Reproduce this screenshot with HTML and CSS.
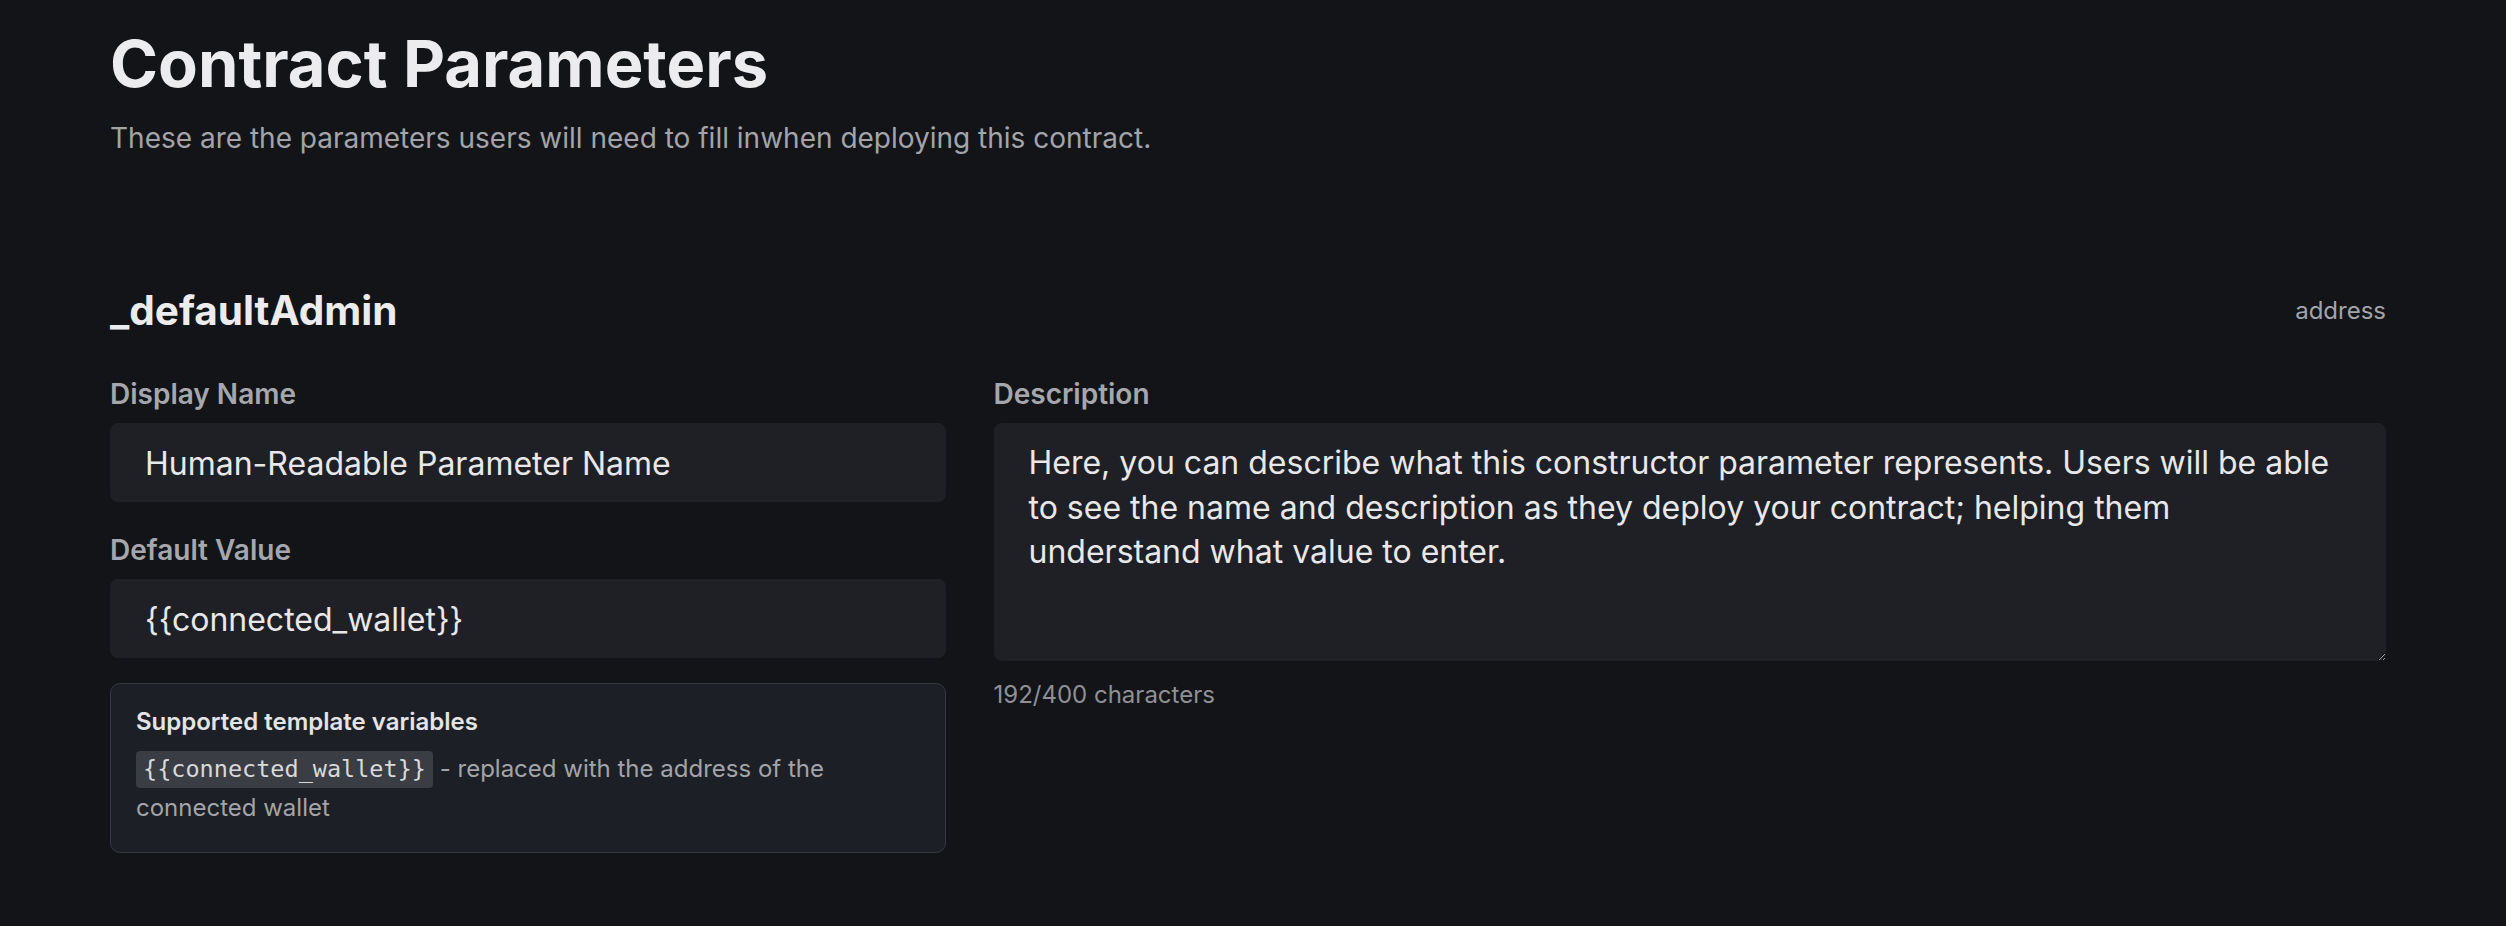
FILE: index.html
```html
<!DOCTYPE html>
<html lang="en">
<head>
<meta charset="utf-8">
<title>Contract Parameters</title>
<link rel="stylesheet" href="styles.css">
</head>
<body>
<main class="page">
  <header class="intro">
    <h1 class="title">Contract Parameters</h1>
    <p class="subtitle">These are the parameters users will need to fill inwhen deploying this contract.</p>
  </header>

  <section class="param">
    <div class="param-head">
      <h2 class="param-name">_defaultAdmin</h2>
      <span class="param-type">address</span>
    </div>
    <div class="param-grid">
      <div class="col">
        <label class="field-label" for="dn">Display Name</label>
        <input class="field-input" id="dn" type="text" value="Human-Readable Parameter Name">
        <label class="field-label field-label--gap" for="dv">Default Value</label>
        <input class="field-input" id="dv" type="text" value="{{connected_wallet}}">
        <div class="hint">
          <div class="hint-title">Supported template variables</div>
          <p class="hint-text"><code class="chip">{{connected_wallet}}</code> - replaced with the address of the connected wallet</p>
        </div>
      </div>
      <div class="col">
        <label class="field-label" for="desc">Description</label>
        <textarea class="field-area" id="desc">Here, you can describe what this constructor parameter represents. Users will be able to see the name and description as they deploy your contract; helping them understand what value to enter.</textarea>
        <div class="counter">192/400 characters</div>
      </div>
    </div>
  </section>
</main>
</body>
</html>
```

FILE: styles.css
```css
html, body {
  margin: 0;
  padding: 0;
  background: #121418;
  color-scheme: dark;
}

body {
  font-family: Inter, "Noto Sans", sans-serif;
  color: #e8e8ea;
}

.page {
  margin-left: 110px;
  width: 2276px;
  padding-top: 25px;
}

.title {
  margin: 0;
  font-size: 65px;
  line-height: 77px;
  font-weight: 700;
  color: #ececee;
}

.subtitle {
  margin: 16px 0 0;
  font-size: 28px;
  line-height: 40px;
  color: #a3a4a9;
}

.param {
  margin-top: 131px;
}

.param-head {
  display: flex;
  justify-content: space-between;
  align-items: center;
}

.param-name {
  margin: 0;
  font-size: 40.5px;
  line-height: 44px;
  font-weight: 700;
  color: #ececee;
}

.param-type {
  font-size: 24px;
  line-height: 30px;
  color: #a3a4a9;
}

.param-grid {
  display: grid;
  grid-template-columns: 3fr 5fr;
  column-gap: 48px;
  margin-top: 44px;
}

.col {
  display: flex;
  flex-direction: column;
  align-items: stretch;
}

.field-label {
  display: block;
  font-size: 28px;
  line-height: 34px;
  font-weight: 600;
  color: #a6a7ac;
  margin-bottom: 12px;
}

.field-label--gap {
  margin-top: 31px;
}

.field-input,
.field-area {
  box-sizing: border-box;
  width: 100%;
  border: 0;
  outline: none;
  background: #1e2025;
  border-radius: 8px;
  font-family: Inter, "Noto Sans", sans-serif;
  font-size: 32px;
  line-height: 44px;
  color: #e8e8ea;
  padding: 18px 35px 17px;
  margin: 0;
}

.field-input {
  height: 79px;
}

.field-area {
  height: 238px;
  line-height: 44.5px;
  resize: vertical;
  display: block;
}

.hint {
  margin-top: 25px;
  border: 1px solid #34373d;
  border-radius: 10px;
  background: #1c1f25;
  padding: 23px 25px 25px;
}

.hint-title {
  font-size: 24px;
  line-height: 30px;
  font-weight: 600;
  color: #e4e4e6;
}

.hint-text {
  margin: 13px 0 0;
  font-size: 24px;
  line-height: 38.5px;
  color: #a3a4a9;
}

.chip {
  display: inline-block;
  font-family: "DejaVu Sans Mono", "Liberation Mono", monospace;
  font-size: 23.5px;
  line-height: 27px;
  color: #d9d9dc;
  background: #3a3d43;
  border-radius: 4px;
  padding: 5px 7px;
}

.counter {
  margin-top: 18px;
  font-size: 24px;
  line-height: 32px;
  color: #8f9096;
}
```
